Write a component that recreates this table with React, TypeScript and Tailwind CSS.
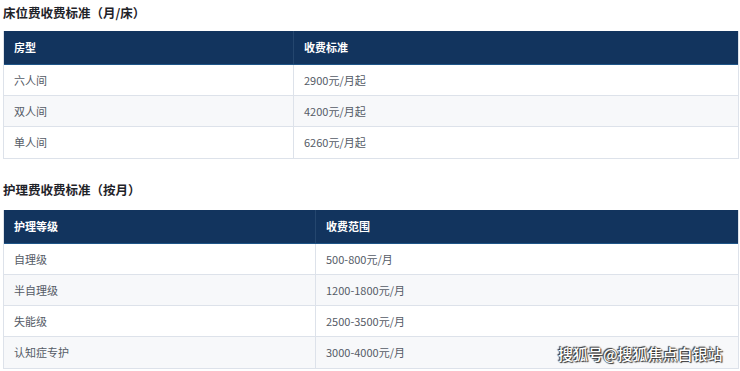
import React from 'react';

const bedRows = [
  ['六人间', '2900元/月起'],
  ['双人间', '4200元/月起'],
  ['单人间', '6260元/月起'],
];

const careRows = [
  ['自理级', '500-800元/月'],
  ['半自理级', '1200-1800元/月'],
  ['失能级', '2500-3500元/月'],
  ['认知症专护', '3000-4000元/月'],
];

function PriceTable({
  head,
  rows,
  cols,
}: {
  head: [string, string];
  rows: string[][];
  cols: string;
}) {
  return (
    <div className="border border-[#dde2ea] border-t-0">
      {/* Header */}
      <div className={`grid ${cols} h-[34px] bg-[#12345e] border-b border-[#1f5587] text-white font-bold text-[11px]`}>
        <div className="flex items-center pl-[10px] border-r border-[#24466e]">{head[0]}</div>
        <div className="flex items-center pl-[10px]">{head[1]}</div>
      </div>
      {rows.map((r, i) => (
        <div
          key={r[0]}
          className={`grid ${cols} h-[31px] text-[11px] text-[#555b66] ${i % 2 === 1 ? 'bg-[#f7f8fa]' : 'bg-white'} ${i < rows.length - 1 ? 'border-b border-[#dde2ea]' : ''}`}
        >
          <div className="flex items-center pl-[10px] border-r border-[#dde2ea]">{r[0]}</div>
          <div className="flex items-center pl-[10px]">{r[1]}</div>
        </div>
      ))}
    </div>
  );
}

export default function App() {
  return (
    <div className="relative w-[740px] h-[371px] overflow-hidden bg-white pl-[3px] pr-[1px] font-['Noto_Sans_CJK_SC','Noto_Sans',sans-serif]">
      <h2 className="h-[31px] pt-[4px] text-[12.5px] font-bold text-[#1f2329] leading-[17px]">床位费收费标准（月/床）</h2>
      <PriceTable head={['房型', '收费标准']} rows={bedRows} cols="grid-cols-[290px_1fr]" />

      <h2 className="h-[51px] pt-[22px] text-[12.5px] font-bold text-[#1f2329] leading-[17px]">护理费收费标准（按月）</h2>
      <PriceTable head={['护理等级', '收费范围']} rows={careRows} cols="grid-cols-[312px_1fr]" />

      {/* Watermark */}
      <div className="absolute left-[558px] top-[344px] text-[15px] leading-[20px] text-white font-medium [text-shadow:0_0_1px_#222,1px_1px_1px_#333,-1px_-1px_1px_#333]">
        搜狐号@搜狐焦点白银站
      </div>
    </div>
  );
}
